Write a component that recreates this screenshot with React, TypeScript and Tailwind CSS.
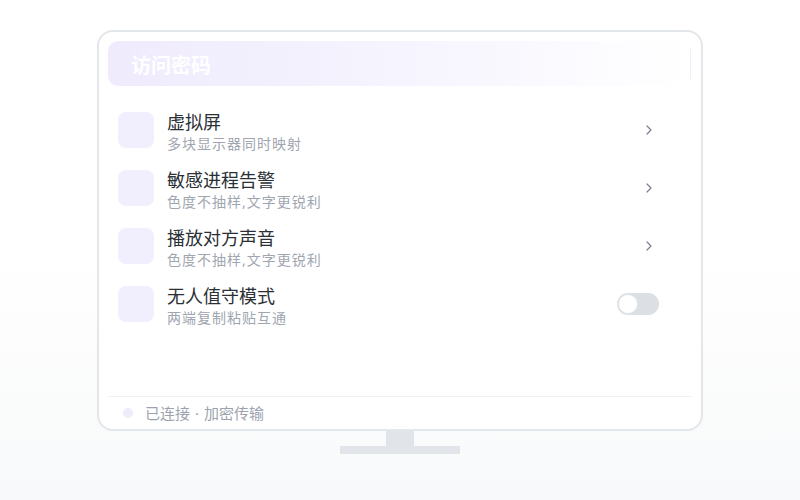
import { useState } from 'react';

const rows = [
  { title: '虚拟屏', sub: '多块显示器同时映射', kind: 'link' },
  { title: '敏感进程告警', sub: '色度不抽样,文字更锐利', kind: 'link' },
  { title: '播放对方声音', sub: '色度不抽样,文字更锐利', kind: 'link' },
  { title: '无人值守模式', sub: '两端复制粘贴互通', kind: 'toggle' },
];

function Chevron() {
  return (
    <svg width="10" height="14" viewBox="0 0 10 14" className="mr-[5px]">
      <polyline points="3,3 7,7 3,11" fill="none" stroke="#7b8190" strokeWidth="1.2" strokeLinecap="round" strokeLinejoin="round" />
    </svg>
  );
}

function Toggle() {
  const [on, setOn] = useState(false);
  return (
    <button
      type="button"
      onClick={() => setOn(!on)}
      className={`flex h-[22px] w-[42px] items-center rounded-full p-[1px] ${on ? 'bg-[#a78bfa] justify-end' : 'bg-[#dcdfe4] justify-start'}`}
    >
      <span className="h-[20px] w-[20px] rounded-full border border-[#e3e5e9] bg-white" />
    </button>
  );
}

export default function App() {
  return (
    <div className="flex h-[500px] w-[800px] flex-col items-center bg-gradient-to-b from-white from-50% to-[#f8f9fa] pt-[30px] font-['Noto_Sans','Noto_Sans_CJK_SC',sans-serif]">
      <div className="flex h-[401px] w-[606px] flex-col rounded-[16px] border-2 border-[#e3e6ea] bg-white p-[9px] pb-0">
        <div className="flex h-[45px] items-center justify-between rounded-[10px] bg-gradient-to-r from-[#efebfd] via-[#f6f4fe] to-white pl-[23px] pr-[1px]">
          <span className="mt-[5px] text-[20px] font-bold leading-none text-white">访问密码</span>
          <span className="h-[30px] w-px bg-[#eef0f3]" />
        </div>

        <div className="mt-[26px] flex flex-col pl-[10px] pr-[33px]">
          {rows.map((r) => (
            <div key={r.title} className="flex h-[58px] items-start">
              <div className="h-[36px] w-[36px] rounded-[8px] bg-[#f1effd]" />
              <div className="ml-[13px] flex flex-1 flex-col">
                <span className="-mt-[1px] text-[18px] leading-[22px] text-[#2b2f36]">{r.title}</span>
                <span className="mt-[2px] text-[14px] leading-[18px] tracking-[1px] text-[#a0a6b0]">{r.sub}</span>
              </div>
              <div className="flex h-[36px] items-center">
                {r.kind === 'link' ? <Chevron /> : <Toggle />}
              </div>
            </div>
          ))}
        </div>

        <div className="flex-1" />

        <div className="mx-[1px] flex h-[33px] items-center border-t border-[#eef0f3] pl-[14px]">
          <span className="h-[10px] w-[10px] rounded-full bg-[#eeebfc]" />
          <span className="ml-[12px] text-[15px] text-[#9ca3af]">
            已连接<span className="mx-[5px]">·</span>加密传输
          </span>
        </div>
      </div>
      <div className="h-[15px] w-[28px] bg-[#e1e4e8]" />
      <div className="h-[8px] w-[120px] bg-[#e1e4e8]" />
    </div>
  );
}
